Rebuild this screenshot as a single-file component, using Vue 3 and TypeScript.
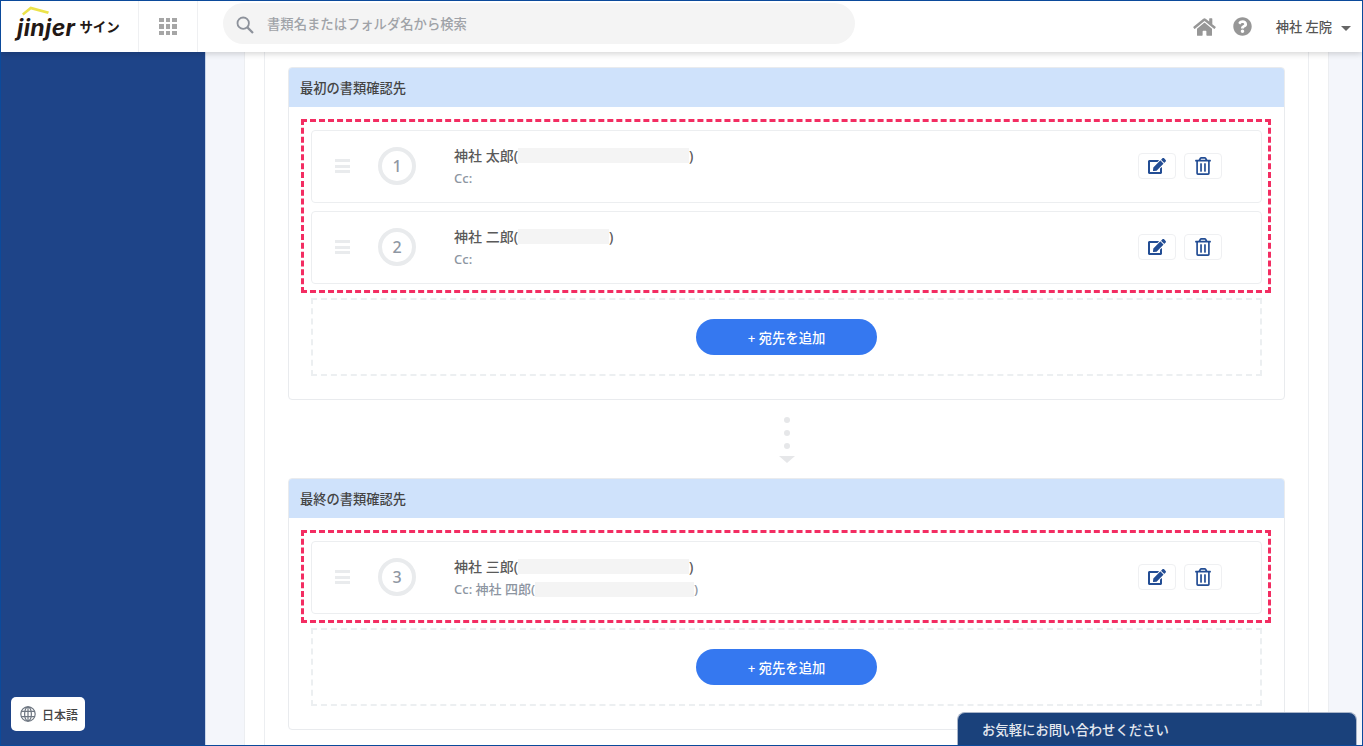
<script setup lang="ts">
interface Person { no: number; name: string; mask: number; cc?: string; ccMask?: number }
interface Section { title: string; people: Person[] }

const sections: Section[] = [
  {
    title: '最初の書類確認先',
    people: [
      { no: 1, name: '神社 太郎', mask: 171 },
      { no: 2, name: '神社 二郎', mask: 91 },
    ],
  },
  {
    title: '最終の書類確認先',
    people: [{ no: 3, name: '神社 三郎', mask: 171, cc: '神社 四郎', ccMask: 159 }],
  },
]
const editPath = 'M402.6 83.2l90.2 90.2c3.8 3.8 3.8 10 0 13.8L274.4 405.6l-92.8 10.3c-12.4 1.4-22.9-9.1-21.5-21.5l10.3-92.8L388.8 83.2c3.8-3.8 10-3.8 13.8 0zm162-22.9l-48.8-48.8c-15.2-15.2-39.9-15.2-55.2 0l-35.4 35.4c-3.8 3.8-3.8 10 0 13.8l90.2 90.2c3.8 3.8 10 3.8 13.8 0l35.4-35.4c15.2-15.3 15.2-40 0-55.2zM384 346.2V448H64V128h229.8c3.2 0 6.2-1.3 8.5-3.5l40-40c7.6-7.6 2.2-20.5-8.5-20.5H48C21.5 64 0 85.5 0 112v352c0 26.5 21.5 48 48 48h352c26.5 0 48-21.5 48-48V306.2c0-10.7-12.9-16-20.5-8.5l-40 40c-2.2 2.3-3.5 5.3-3.5 8.5z'
const trashPath = 'M268 416h24a12 12 0 0 0 12-12V188a12 12 0 0 0-12-12h-24a12 12 0 0 0-12 12v216a12 12 0 0 0 12 12zM432 80h-82.41l-34-56.7A48 48 0 0 0 274.41 0H173.59a48 48 0 0 0-41.16 23.3L98.41 80H16A16 16 0 0 0 0 96v16a16 16 0 0 0 16 16h16v336a48 48 0 0 0 48 48h288a48 48 0 0 0 48-48V128h16a16 16 0 0 0 16-16V96a16 16 0 0 0-16-16zM171.84 50.91A6 6 0 0 1 177 48h94a6 6 0 0 1 5.15 2.91L293.61 80H154.39zM368 464H80V128h288zm-212-48h24a12 12 0 0 0 12-12V188a12 12 0 0 0-12-12h-24a12 12 0 0 0-12 12v216a12 12 0 0 0 12 12z'
const homePath = 'M280.37 148.26L96 300.11V464a16 16 0 0 0 16 16l112.06-.29a16 16 0 0 0 15.92-16V368a16 16 0 0 1 16-16h64a16 16 0 0 1 16 16v95.64a16 16 0 0 0 16 16.05L464 480a16 16 0 0 0 16-16V300L295.67 148.26a12.19 12.19 0 0 0-15.3 0zM571.6 251.47L488 182.56V44.05a12 12 0 0 0-12-12h-56a12 12 0 0 0-12 12v72.61L318.47 43a48 48 0 0 0-61 0L4.34 251.47a12 12 0 0 0-1.6 16.9l25.5 31A12 12 0 0 0 45.15 301l235.22-193.74a12.19 12.19 0 0 1 15.3 0L530.9 301a12 12 0 0 0 16.9-1.6l25.5-31a12 12 0 0 0-1.7-16.93z'
const helpPath = 'M504 256c0 136.997-111.043 248-248 248S8 392.997 8 256C8 119.083 119.043 8 256 8s248 111.083 248 248zM262.655 90c-54.497 0-89.255 22.957-116.549 63.758-3.536 5.286-2.353 12.415 2.715 16.258l34.699 26.31c5.205 3.947 12.621 3.008 16.665-2.122 17.864-22.658 30.113-35.797 57.303-35.797 20.429 0 45.698 13.148 45.698 32.958 0 14.976-12.363 22.667-32.534 33.976C247.128 238.528 216 254.941 216 296v4c0 6.627 5.373 12 12 12h56c6.627 0 12-5.373 12-12v-1.333c0-28.462 83.186-29.647 83.186-106.667 0-58.002-60.165-102-116.531-102zM256 338c-25.365 0-46 20.635-46 46 0 25.364 20.635 46 46 46s46-20.636 46-46c0-25.365-20.635-46-46-46z'
</script>

<template>
  <div class="app">
    <header class="topbar">
      <div class="logo">
        <svg class="roof" viewBox="0 0 28 10" width="28" height="10">
          <path d="M0 7.5 L8.5 .5 L27 5.5 L26 8 L9 3.6 L1.5 9.5 Z" fill="#ece34a" />
        </svg>
        <span class="logo-word">jinjer</span>
        <span class="logo-sub">サイン</span>
      </div>
      <div class="apps">
        <div class="apps-grid"><i v-for="n in 9" :key="n"></i></div>
      </div>
      <div class="search">
        <svg viewBox="0 0 20 20" width="20" height="20" fill="none" stroke="#8d929b" stroke-width="1.8">
          <circle cx="8.2" cy="8.2" r="5.7" />
          <path d="M12.4 12.4 L18 18" stroke-width="2.2" />
        </svg>
        <span>書類名またはフォルダ名から検索</span>
      </div>
      <div class="top-right">
        <svg viewBox="0 0 576 512" width="23" height="20" fill="#979797"><path :d="homePath" /></svg>
        <svg viewBox="0 0 512 512" width="19" height="19" fill="#979797"><path :d="helpPath" /></svg>
        <span class="user">神社 左院</span>
        <span class="caret"></span>
      </div>
    </header>

    <div class="body">
      <aside class="sidebar">
        <button class="lang">
          <svg viewBox="0 0 16 16" width="16" height="16" fill="none" stroke="#6f7782" stroke-width="1.2">
            <circle cx="8" cy="8" r="7.2" />
            <ellipse cx="8" cy="8" rx="3.4" ry="7.2" />
            <path d="M1 5.4 H15 M1 10.6 H15 M8 .8 V15.2" />
          </svg>
          <span>日本語</span>
        </button>
      </aside>

      <main class="content">
        <div class="panel">
          <div class="card">
            <template v-for="(s, i) in sections" :key="s.title">
              <div v-if="i > 0" class="flow">
                <i></i><i></i><i></i><b></b>
              </div>
              <section class="section">
                <h2>{{ s.title }}</h2>
                <div class="section-body">
                  <div class="highlight">
                    <div v-for="p in s.people" :key="p.no" class="row">
                      <div class="handle"><i></i><i></i><i></i></div>
                      <div class="num">{{ p.no }}</div>
                      <div class="who">
                        <div class="name">{{ p.name }}(<span class="mask" :style="{ width: p.mask + 'px' }"></span>)</div>
                        <div class="cc">Cc:<template v-if="p.cc">{{ ' ' + p.cc }}(<span class="mask" :style="{ width: p.ccMask + 'px' }"></span>)</template></div>
                      </div>
                      <div class="actions">
                        <button><svg viewBox="0 0 576 512" width="18" height="16" fill="#234d94"><path :d="editPath" /></svg></button>
                        <button><svg viewBox="0 0 448 512" width="16" height="18" fill="#234d94"><path :d="trashPath" /></svg></button>
                      </div>
                    </div>
                  </div>
                  <div class="drop">
                    <button class="add">+ 宛先を追加</button>
                  </div>
                </div>
              </section>
            </template>
          </div>
        </div>
      </main>
    </div>

    <div class="chat">お気軽にお問い合わせください</div>
  </div>
</template>

<style>
html, body { margin: 0; overflow: hidden; }
</style>

<style scoped>
.app {
  position: relative;
  box-sizing: border-box;
  width: 1363px;
  height: 746px;
  overflow: hidden;
  border: 1px solid #0b4a9b;
  display: flex;
  flex-direction: column;
  font-family: "Noto Sans", "Noto Sans CJK JP", sans-serif;
  background: #f4f6fb;
}
.topbar {
  position: relative;
  z-index: 2;
  flex: 0 0 51px;
  display: flex;
  align-items: stretch;
  background: #fff;
  box-shadow: 0 2px 6px rgba(0, 0, 0, .16);
}
.logo {
  position: relative;
  width: 138px;
  box-sizing: border-box;
  border-right: 1px solid #eff0f2;
  display: flex;
  align-items: center;
  padding-left: 16px;
}
.roof { position: absolute; left: 21px; top: 5px; }
.logo-word {
  font-family: "Inter", sans-serif;
  font-weight: 700;
  font-style: italic;
  font-size: 23px;
  letter-spacing: .4px;
  color: #231815;
  margin-top: 2px;
}
.logo-sub {
  font-family: "Noto Sans CJK JP", sans-serif;
  font-weight: 700;
  font-size: 13.5px;
  color: #231815;
  margin-left: 4px;
  margin-top: -1px;
}
.apps {
  width: 59px;
  box-sizing: border-box;
  border-right: 1px solid #eff0f2;
  display: flex;
  align-items: center;
  justify-content: center;
}
.apps-grid {
  display: grid;
  grid-template-columns: repeat(3, 4.5px);
  grid-auto-rows: 4.5px;
  gap: 2px;
}
.apps-grid i { background: #a6a6a6; }
.search {
  width: 632px;
  height: 41px;
  margin: 2px 0 0 25px;
  box-sizing: border-box;
  padding-left: 13px;
  border-radius: 21px;
  background: #f4f4f4;
  display: flex;
  align-items: center;
  gap: 11px;
  font-size: 13.33px;
  color: #a0a3a8;
  font-weight: 500;
}
.search svg { margin-top: 3px; margin-left: -1px; margin-right: 1px; }
.top-right {
  margin-left: auto;
  display: flex;
  align-items: center;
  padding-right: 11px;
  color: #555;
  font-size: 13.2px;
  font-weight: 500;
}
.top-right svg:nth-child(2) { margin-left: 17px; }
.user { margin-left: 24px; }
.caret {
  margin-left: 9px;
  margin-top: 4px;
  width: 0;
  height: 0;
  border-left: 5px solid transparent;
  border-right: 5px solid transparent;
  border-top: 5px solid #666;
}
.body { flex: 1; display: flex; min-height: 0; }
.sidebar {
  position: relative;
  flex: 0 0 204px;
  background: #1e4488;
  border-right: 1px solid #c9d6ea;
}
.lang {
  position: absolute;
  left: 10px;
  bottom: 14px;
  width: 74px;
  height: 34px;
  border: 0;
  border-radius: 5px;
  background: #fff;
  display: flex;
  align-items: center;
  gap: 6px;
  padding: 0 0 0 9px;
  font: 500 12px "Noto Sans CJK JP", sans-serif;
  color: #444;
}
.content {
  flex: 1;
  min-width: 0;
  padding: 0 33px 0 38px;
  overflow: hidden;
}
.panel {
  box-sizing: border-box;
  height: 100%;
  background: #fff;
  border-left: 1px solid #eceef1;
  border-right: 1px solid #eceef1;
  padding: 0 19px;
}
.card {
  box-sizing: border-box;
  min-height: 100%;
  background: #fff;
  border-left: 1px solid #eceef1;
  border-right: 1px solid #eceef1;
  padding: 15px 23px 0;
}
.section {
  border: 1px solid #e9ebee;
  border-radius: 4px;
  background: #fff;
  overflow: hidden;
}
.section h2 {
  margin: -1px -1px 0;
  height: 40px;
  padding-left: 12px;
  background: #cfe2fb;
  display: flex;
  align-items: center;
  font-size: 13.25px;
  font-weight: 500;
  color: #444;
}
.section-body { padding: 12px 13px 23px 12px; }
.highlight {
  border: 3px dashed #f32d62;
  padding: 8px 6px 6px 7px;
  display: flex;
  flex-direction: column;
  gap: 8px;
}
.row {
  height: 73px;
  box-sizing: border-box;
  border: 1px solid #eceef0;
  border-radius: 4px;
  display: flex;
  align-items: center;
  padding-left: 23px;
}
.handle {
  width: 15px;
  margin-top: -1px;
  display: flex;
  flex-direction: column;
  gap: 2.5px;
}
.handle i { height: 3px; background: #e9ebed; }
.num {
  margin-left: 28px;
  margin-top: -1px;
  width: 38px;
  height: 38px;
  box-sizing: border-box;
  border: 4px solid #e9ebed;
  border-radius: 50%;
  display: flex;
  align-items: center;
  justify-content: center;
  font-size: 16px;
  font-weight: 500;
  color: #8f97a3;
}
.who { margin-left: 38px; }
.name {
  font-size: 14px;
  font-weight: 500;
  line-height: 20px;
  color: #5a5a5a;
  display: flex;
  align-items: center;
}
.cc {
  font-size: 13px;
  font-weight: 500;
  line-height: 20px;
  margin-top: 2px;
  color: #8d95a1;
}
.mask {
  display: inline-block;
  height: 15px;
  background: #f4f4f4;
  vertical-align: -3px;
}
.actions {
  margin-left: auto;
  margin-right: 39px;
  margin-top: -1px;
  display: flex;
  gap: 8px;
}
.actions button {
  width: 38px;
  height: 26px;
  padding: 0;
  background: #fff;
  border: 1px solid #eff0f2;
  border-radius: 4px;
  display: flex;
  align-items: center;
  justify-content: center;
}
.drop {
  margin: 5px 9px 0 10px;
  height: 78px;
  box-sizing: border-box;
  border: 2px dashed #eceff1;
  display: flex;
  align-items: center;
  justify-content: center;
}
.add {
  width: 181px;
  height: 36px;
  border: 0;
  border-radius: 18px;
  background: #3578f0;
  color: #fff;
  font: 500 13.3px "Noto Sans", "Noto Sans CJK JP", sans-serif;
}
.flow {
  height: 78px;
  display: flex;
  flex-direction: column;
  align-items: center;
  padding-top: 17px;
  box-sizing: border-box;
  gap: 7px;
}
.flow i {
  width: 6px;
  height: 6px;
  border-radius: 50%;
  background: #e6e7e9;
}
.flow b {
  width: 0;
  height: 0;
  border-left: 8px solid transparent;
  border-right: 8px solid transparent;
  border-top: 7px solid #e6e7e9;
}
.chat {
  position: absolute;
  right: 5px;
  bottom: -1px;
  width: 400px;
  height: 34px;
  box-sizing: border-box;
  padding-left: 24px;
  display: flex;
  align-items: center;
  background: #1a417b;
  border: 1px solid #a9b5c9;
  border-bottom: 0;
  border-radius: 8px 8px 0 0;
  color: #e4e8ef;
  font-size: 13.35px;
  font-weight: 500;
}
</style>
